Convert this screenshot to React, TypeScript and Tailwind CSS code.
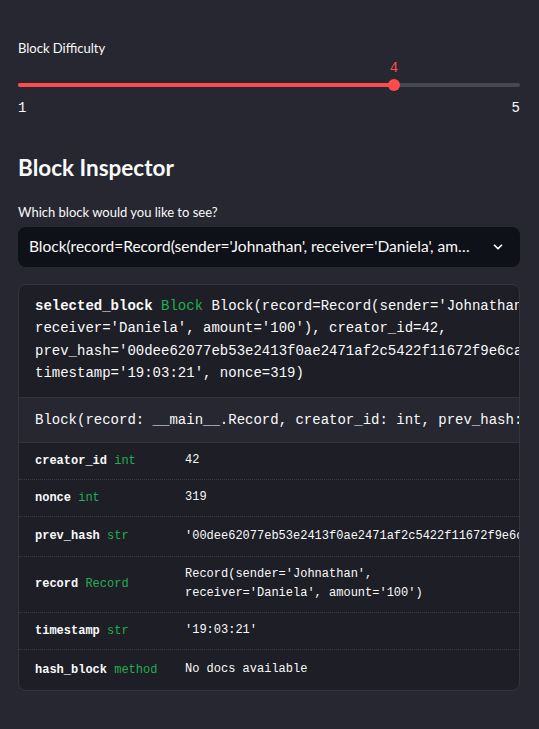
import React from "react";

const mono = { fontFamily: '"Liberation Mono", "DejaVu Sans Mono", monospace' };
const sans = { fontFamily: 'Lato, "Noto Sans", sans-serif' };

const rows: { name: string; type: string; value: React.ReactNode; h: string }[] = [
  { name: "creator_id", type: "int", value: "42", h: "h-[37px]" },
  { name: "nonce", type: "int", value: "319", h: "h-[37px]" },
  {
    name: "prev_hash",
    type: "str",
    value: "'00dee62077eb53e2413f0ae2471af2c5422f11672f9e6ca5b1d2e'",
    h: "h-[40px]",
  },
  {
    name: "record",
    type: "Record",
    value: (
      <>
        Record(sender='Johnathan',
        <br />
        receiver='Daniela', amount='100')
      </>
    ),
    h: "h-[56px]",
  },
  { name: "timestamp", type: "str", value: "'19:03:21'", h: "h-[37px]" },
  { name: "hash_block", type: "method", value: "No docs available", h: "h-[40px]" },
];

export default function App() {
  return (
    <div className="min-h-[729px] w-[539px] bg-[#262730] pl-[18px] pr-[19px] pt-[38px] text-[#fafafa]" style={sans}>
      {/* Slider */}
      <div className="text-[13px] leading-[20px]">Block Difficulty</div>
      <div className="relative h-[26px]">
        <div className="absolute left-[351px] top-[2px] w-[50px] text-center text-[14px] leading-[16px] text-[#ff4b4b]" style={mono}>
          4
        </div>
        <div className="absolute left-0 right-0 top-[25px] h-[4px] rounded-full bg-[#474852]" />
        <div className="absolute left-0 top-[25px] h-[4px] w-[376px] rounded-full bg-[#ff4b4b]" />
        <div className="absolute left-[370px] top-[21px] h-[12px] w-[12px] rounded-full bg-[#ff4b4b]" />
      </div>
      <div className="mt-[16px] flex justify-between text-[14px] leading-[16px]" style={mono}>
        <span>1</span>
        <span>5</span>
      </div>

      {/* Heading */}
      <h2 className="mt-[37px] text-[22.5px] font-bold leading-[30px]">Block Inspector</h2>
      <div className="mt-[19px] text-[13px] leading-[20px]">Which block would you like to see?</div>
      <div className="mt-[5px] flex h-[40px] items-center rounded-[8px] bg-[#0e1117] pl-[11px] pr-[15px]">
        <span className="flex-1 truncate text-[15.5px]">
          Block(record=Record(sender='Johnathan', receiver='Daniela', amount='100'), creator_id=42)
        </span>
        <svg width="14" height="14" viewBox="0 0 24 24" className="ml-[16px] shrink-0" fill="none" stroke="#fafafa" strokeWidth="3" strokeLinecap="round" strokeLinejoin="round">
          <path d="M6 9l6 6 6-6" />
        </svg>
      </div>

      {/* Help panel */}
      <div className="mt-[17px] overflow-hidden rounded-[8px] border border-[#33343d] bg-[#1d1e26]" style={mono}>
        <div className="whitespace-nowrap pb-[12px] pl-[16px] pt-[10px] text-[14px] leading-[22.4px]">
          <div>
            <span className="font-bold">selected_block</span> <span className="text-[#24ad4e]">Block</span>{" "}
            Block(record=Record(sender='Johnathan',
          </div>
          <div>receiver='Daniela', amount='100'), creator_id=42,</div>
          <div>prev_hash='00dee62077eb53e2413f0ae2471af2c5422f11672f9e6ca5b1d2e',</div>
          <div>timestamp='19:03:21', nonce=319)</div>
        </div>
        <div className="whitespace-nowrap border-y border-[#33343d] bg-[#262730] py-[11px] pl-[16px] text-[14px] leading-[22px]">
          Block(record: __main__.Record, creator_id: int, prev_hash: str, timestamp: str, nonce: int)
        </div>
        <div className="text-[12px]">
          {rows.map((r, i) => (
            <div
              key={r.name}
              className={`flex items-center ${r.h} ${i < rows.length - 1 ? "border-b border-dotted border-[#3a3b45]" : ""}`}
            >
              <div className="w-[166px] shrink-0 pl-[16px]">
                <span className="font-bold">{r.name}</span> <span className="text-[#24ad4e]">{r.type}</span>
              </div>
              <div className="whitespace-nowrap leading-[19px]">{r.value}</div>
            </div>
          ))}
        </div>
      </div>
    </div>
  );
}
